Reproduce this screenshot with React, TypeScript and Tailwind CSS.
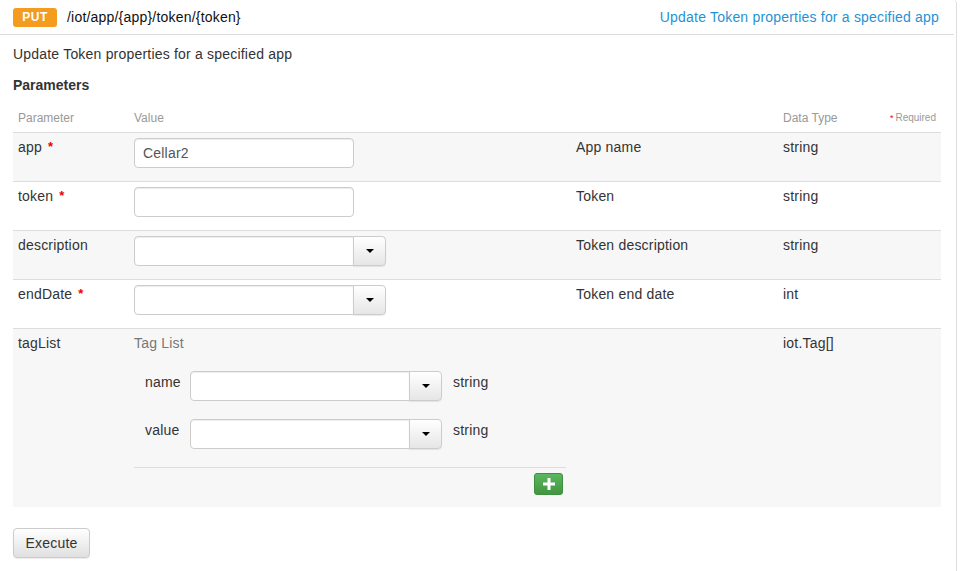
import React from 'react';

const font = { fontFamily: '"Liberation Sans", Arial, sans-serif' };

function Caret() {
  return (
    <span className="inline-block w-0 h-0 border-l-[4px] border-r-[4px] border-t-[4px] border-l-transparent border-r-transparent border-t-black" />
  );
}

function TextInput({ value = '' }: { value?: string }) {
  return (
    <input
      readOnly
      value={value}
      className="w-[220px] h-[30px] px-2 text-[14px] tracking-[0.2px] text-[#555] bg-white border border-[#ccc] rounded-[4px] shadow-[inset_0_1px_1px_rgba(0,0,0,0.075)] outline-none"
    />
  );
}

function ComboInput({ width = 'w-[252px]' }: { width?: string }) {
  return (
    <div className={`flex h-[30px] ${width}`}>
      <input
        readOnly
        className="flex-1 min-w-0 px-2 text-[14px] bg-white border border-[#ccc] rounded-l-[4px] shadow-[inset_0_1px_1px_rgba(0,0,0,0.075)] outline-none"
      />
      <button className="w-[33px] -ml-px flex items-center justify-center border border-[#ccc] rounded-r-[4px] bg-gradient-to-b from-white to-[#e6e6e6] shadow-[0_1px_1px_rgba(0,0,0,0.08)]">
        <Caret />
      </button>
    </div>
  );
}

function Req() {
  return <span className="ml-[6px] text-[#e00] text-[13px] font-bold align-top">*</span>;
}

type Row = {
  name: string;
  required: boolean;
  input: 'text' | 'combo';
  value?: string;
  desc: string;
  type: string;
};

const rows: Row[] = [
  { name: 'app', required: true, input: 'text', value: 'Cellar2', desc: 'App name', type: 'string' },
  { name: 'token', required: true, input: 'text', desc: 'Token', type: 'string' },
  { name: 'description', required: false, input: 'combo', desc: 'Token description', type: 'string' },
  { name: 'endDate', required: true, input: 'combo', desc: 'Token end date', type: 'int' },
];

export default function App() {
  return (
    <div style={font} className="w-[957px] min-h-[571px] bg-white border-r border-[#ddd] rounded-tr-[4px] text-[#333] text-[14px] leading-[20px] tracking-[0.2px]">
      {/* heading */}
      <div className="h-[35px] border-b border-[#ddd] flex items-center pl-[13px] pr-[15px] mr-[2px]">
        <span className="w-[44px] h-[19px] rounded-[3px] bg-[#f39c1f] text-white text-[12px] font-bold flex items-center justify-center tracking-[0.5px]">
          PUT
        </span>
        <span className="ml-[10px] text-[#111]">/iot/app/&#123;app&#125;/token/&#123;token&#125;</span>
        <span className="ml-auto text-[#1f93d5]">Update Token properties for a specified app</span>
      </div>

      <div className="pl-[13px] pr-[15px]">
        <p className="mt-[9px]">Update Token properties for a specified app</p>
        <h4 className="mt-[11px] font-bold tracking-normal">Parameters</h4>

        <table className="mt-[7px] w-[928px] table-fixed border-collapse">
          <colgroup>
            <col className="w-[116px]" />
            <col className="w-[442px]" />
            <col className="w-[207px]" />
            <col className="w-[163px]" />
          </colgroup>
          <thead>
            <tr className="h-[30px] text-[12px] text-[#999] tracking-normal">
              <th className="font-normal text-left px-[5px] pt-[6px] pb-[4px] align-middle">Parameter</th>
              <th className="font-normal text-left px-[5px] pt-[6px] pb-[4px] align-middle">Value</th>
              <th />
              <th className="font-normal text-left px-[5px] pt-[6px] pb-[4px] align-middle">
                <div className="flex items-center">
                  <span>Data Type</span>
                  <span className="ml-auto text-[10px] text-[#999]">
                    <span className="text-[#e00] text-[9px] mr-[2px]">*</span>Required
                  </span>
                </div>
              </th>
            </tr>
          </thead>
          <tbody>
            {rows.map((r, i) => (
              <tr key={r.name} className={`h-[49px] border-t border-[#ddd] ${i % 2 === 0 ? 'bg-[#f7f7f7]' : 'bg-white'}`}>
                <td className="align-top px-[5px] pt-[4px]">
                  {r.name}
                  {r.required && <Req />}
                </td>
                <td className="align-top px-[5px] pt-[5px]">
                  {r.input === 'text' ? <TextInput value={r.value} /> : <ComboInput />}
                </td>
                <td className="align-top px-[5px] pt-[4px]">{r.desc}</td>
                <td className="align-top px-[5px] pt-[4px]">{r.type}</td>
              </tr>
            ))}
            <tr className="border-t border-[#ddd] bg-[#f7f7f7]">
              <td className="align-top px-[5px] pt-[4px]">tagList</td>
              <td className="align-top px-[5px] pt-[4px] pb-[12px]">
                <div className="text-[#777]">Tag List</div>
                <div className="mt-[18px] flex flex-col gap-[18px] pl-[11px]">
                  {['name', 'value'].map((n) => (
                    <div key={n} className="flex items-start">
                      <span className="w-[45px] pt-[1px]">{n}</span>
                      <ComboInput />
                      <span className="ml-[11px] pt-[1px]">string</span>
                    </div>
                  ))}
                </div>
                <div className="mt-[18px] border-t border-[#ddd]" />
                <div className="mt-[5px] flex justify-end pr-[3px]">
                  <button className="w-[29px] h-[22px] rounded-[3px] border border-[#3e8f3e] bg-gradient-to-b from-[#5cb85c] to-[#419641] flex items-center justify-center">
                    <svg width="12" height="12" viewBox="0 0 12 12">
                      <path d="M4.5 0h3v4.5H12v3H7.5V12h-3V7.5H0v-3h4.5z" fill="white" />
                    </svg>
                  </button>
                </div>
              </td>
              <td />
              <td className="align-top px-[5px] pt-[4px]">iot.Tag[]</td>
            </tr>
          </tbody>
        </table>

        <button className="mt-[21px] w-[77px] h-[30px] border border-[#ccc] rounded-[4px] bg-gradient-to-b from-white to-[#e0e0e0] text-[#333] text-[14px] shadow-[0_1px_1px_rgba(0,0,0,0.08)]">
          Execute
        </button>
      </div>
    </div>
  );
}
